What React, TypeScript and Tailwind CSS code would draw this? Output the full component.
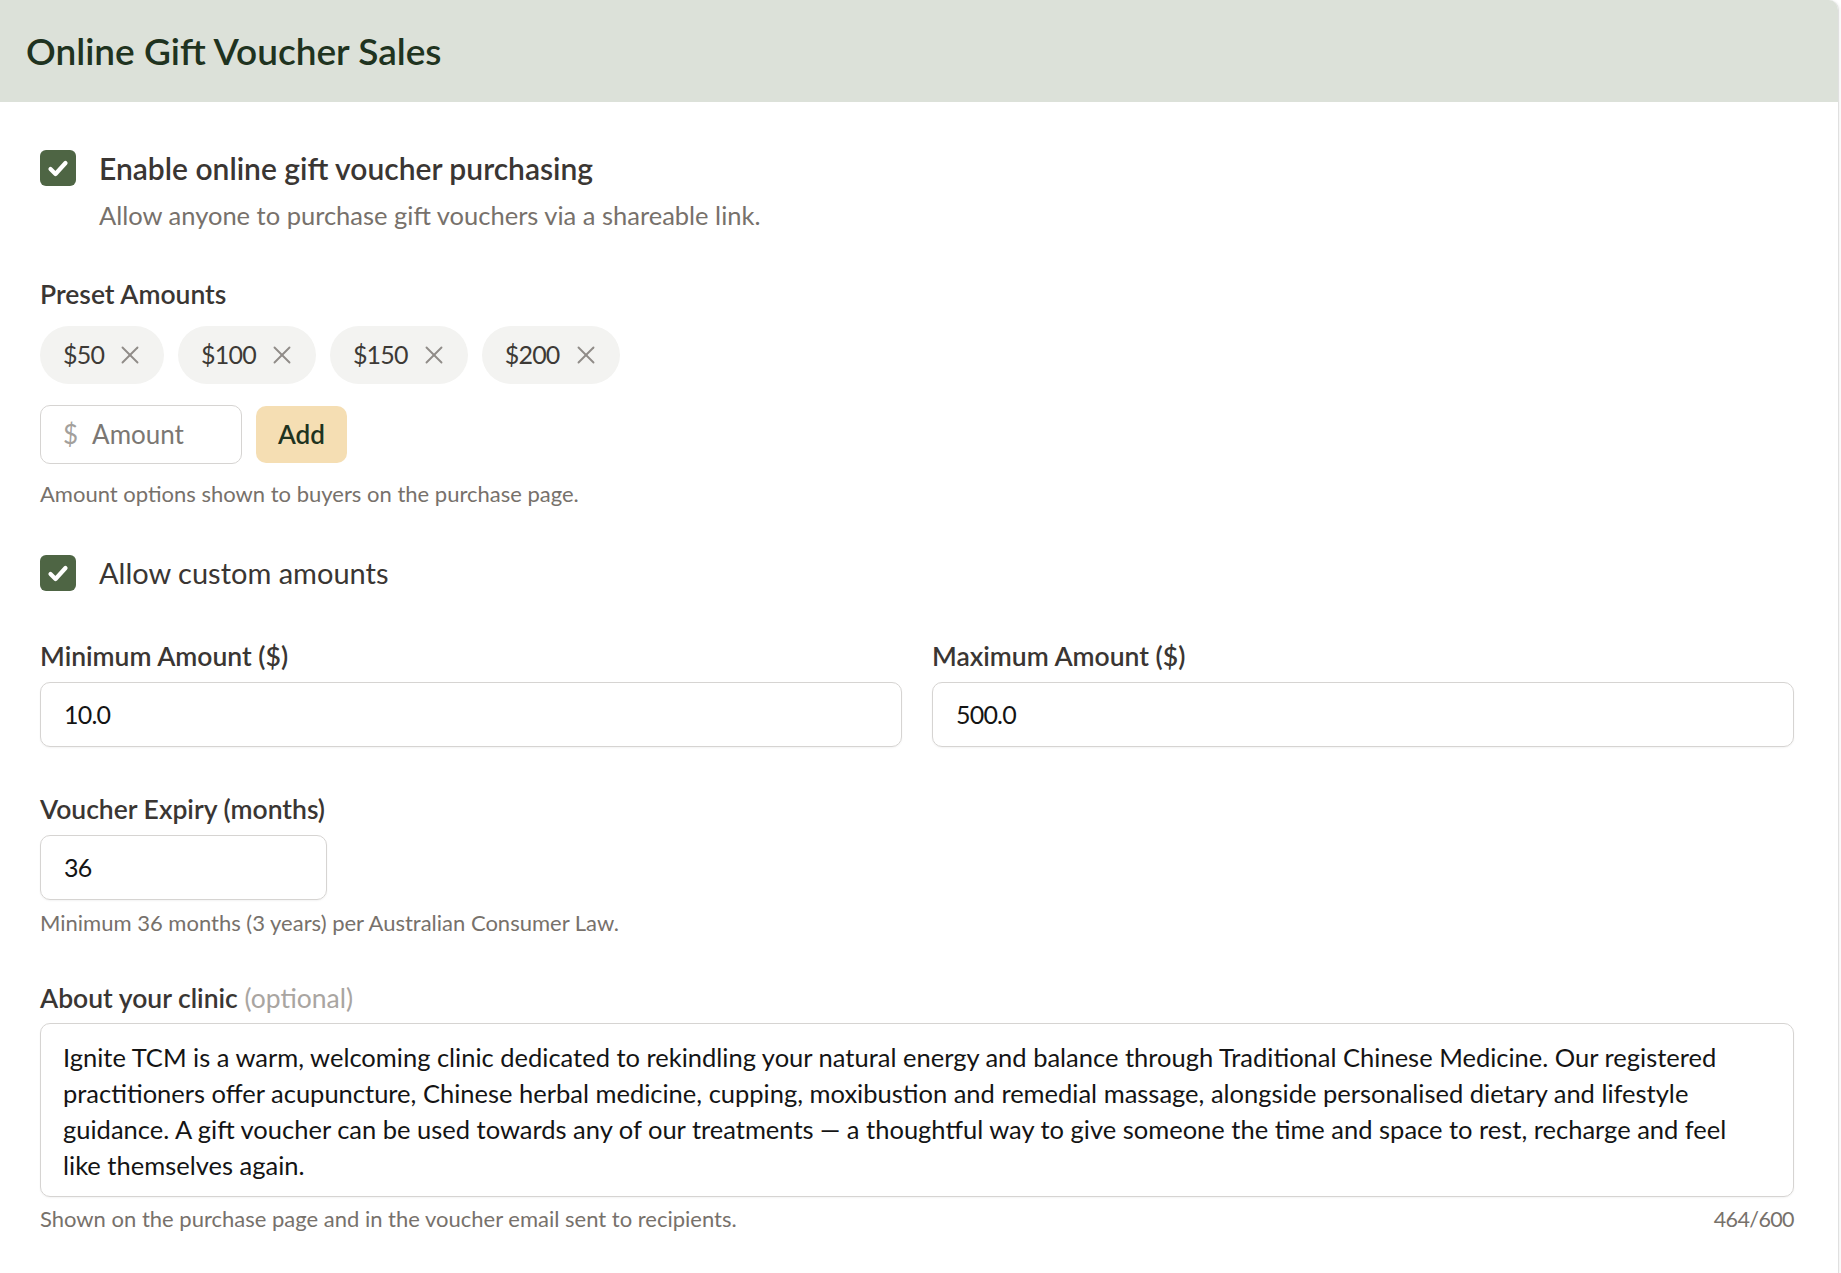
import { X } from "lucide-react";

const presets = ["$50", "$100", "$150", "$200"];

const aboutLines = [
  "Ignite TCM is a warm, welcoming clinic dedicated to rekindling your natural energy and balance through Traditional Chinese Medicine. Our registered",
  "practitioners offer acupuncture, Chinese herbal medicine, cupping, moxibustion and remedial massage, alongside personalised dietary and lifestyle",
  "guidance. A gift voucher can be used towards any of our treatments \u2014 a thoughtful way to give someone the time and space to rest, recharge and feel",
  "like themselves again.",
];

function Checkbox() {
  return (
    <span className="flex h-9 w-9 shrink-0 items-center justify-center rounded-[6px] bg-[#4e6544]">
      <svg width="36" height="36" viewBox="0 0 36 36" fill="none">
        <polyline
          points="10.5,19 15.5,24 25.5,13"
          stroke="white"
          strokeWidth="4.2"
          strokeLinecap="round"
          strokeLinejoin="round"
        />
      </svg>
    </span>
  );
}

function FieldLabel({ children }: { children: React.ReactNode }) {
  return (
    <p className="text-[26.5px] font-semibold leading-[32px] text-[#3a3633]">
      {children}
    </p>
  );
}

function Helper({ children }: { children: React.ReactNode }) {
  return <p className="text-[22px] leading-[32px] text-[#77716b]">{children}</p>;
}

function TextInput({ value, width }: { value: string; width?: string }) {
  return (
    <div
      className={`mt-[10px] flex h-[65px] items-center rounded-[10px] border border-[#d6d4d2] pl-[23px] text-[25px] tracking-[-0.8px] text-[#141414] shadow-[0_1px_2px_rgba(0,0,0,0.05)] ${width ?? ""}`}
    >
      {value}
    </div>
  );
}

export default function App() {
  return (
    <div className="min-h-screen bg-white font-['Lato',sans-serif]">
      <div className="min-h-[1273px] w-[1839px] overflow-hidden rounded-tr-[10px] border-r border-[#e0e0e0] bg-white shadow-[1px_0_3px_rgba(0,0,0,0.06)]">
        <header className="flex h-[102px] items-center bg-[#dce1d9] px-[26px] pb-[2px]">
          <h1 className="text-[37px] font-semibold leading-none text-[#1f3320]">
            Online Gift Voucher Sales
          </h1>
        </header>

        <div className="pl-[40px] pr-[44px] pt-[48px]">
          <div className="flex gap-[23px]">
            <Checkbox />
            <div>
              <p className="text-[30px] font-semibold leading-[36px] text-[#3a3633]">
                Enable online gift voucher purchasing
              </p>
              <p className="mt-[11px] text-[25.5px] leading-[36px] text-[#77716b]">
                Allow anyone to purchase gift vouchers via a shareable link.
              </p>
            </div>
          </div>

          <div className="mt-[45px]">
            <FieldLabel>Preset Amounts</FieldLabel>
          </div>
          <div className="mt-[16px] flex gap-[14px]">
            {presets.map((amount) => (
              <span
                key={amount}
                className="flex h-[58px] items-center gap-[11px] rounded-full bg-[#f3f3f1] pl-[23px] pr-[19px] text-[25px] tracking-[-0.8px] text-[#3d3a36]"
              >
                {amount}
                <X className="h-[30px] w-[30px] text-[#908c88]" strokeWidth={1.5} />
              </span>
            ))}
          </div>

          <div className="mt-[21px] flex items-center gap-[14px]">
            <div className="flex h-[59px] w-[202px] items-center gap-[14px] rounded-[10px] border border-[#d6d4d2] pl-[22px] text-[26px]">
              <span className="text-[#a3a09c]">$</span>
              <span className="text-[#7b7773]">Amount</span>
            </div>
            <button className="h-[57px] w-[91px] rounded-[10px] bg-[#f5deb3] text-[26px] font-semibold text-[#1f3320]">
              Add
            </button>
          </div>
          <div className="mt-[14px]">
            <Helper>Amount options shown to buyers on the purchase page.</Helper>
          </div>

          <div className="mt-[45px] flex items-center gap-[23px]">
            <Checkbox />
            <span className="text-[29px] leading-[36px] text-[#3a3633]">
              Allow custom amounts
            </span>
          </div>

          <div className="mt-[49px] grid grid-cols-2 gap-[30px]">
            <div>
              <FieldLabel>Minimum Amount ($)</FieldLabel>
              <TextInput value="10.0" />
            </div>
            <div>
              <FieldLabel>Maximum Amount ($)</FieldLabel>
              <TextInput value="500.0" />
            </div>
          </div>

          <div className="mt-[46px]">
            <FieldLabel>Voucher Expiry (months)</FieldLabel>
          </div>
          <TextInput value="36" width="w-[287px]" />
          <div className="mt-[7px]">
            <Helper>Minimum 36 months (3 years) per Australian Consumer Law.</Helper>
          </div>

          <div className="mt-[43px]">
            <p className="text-[26.5px] font-semibold leading-[32px] text-[#3a3633]">
              About your clinic{" "}
              <span className="font-normal text-[#a9a5a1]">(optional)</span>
            </p>
          </div>
          <div className="mt-[9px] h-[174px] rounded-[10px] border border-[#d6d4d2] pl-[22px] pt-[15px] text-[25.5px] leading-[36px] text-[#141414] shadow-[0_1px_2px_rgba(0,0,0,0.05)]">
            {aboutLines.map((line) => (
              <div key={line} className="whitespace-nowrap">
                {line}
              </div>
            ))}
          </div>
          <div className="mt-[6px] flex justify-between">
            <Helper>Shown on the purchase page and in the voucher email sent to recipients.</Helper>
            <p className="text-[21.5px] leading-[32px] tracking-[-0.6px] text-[#77716b]">464/600</p>
          </div>
        </div>
      </div>
    </div>
  );
}
